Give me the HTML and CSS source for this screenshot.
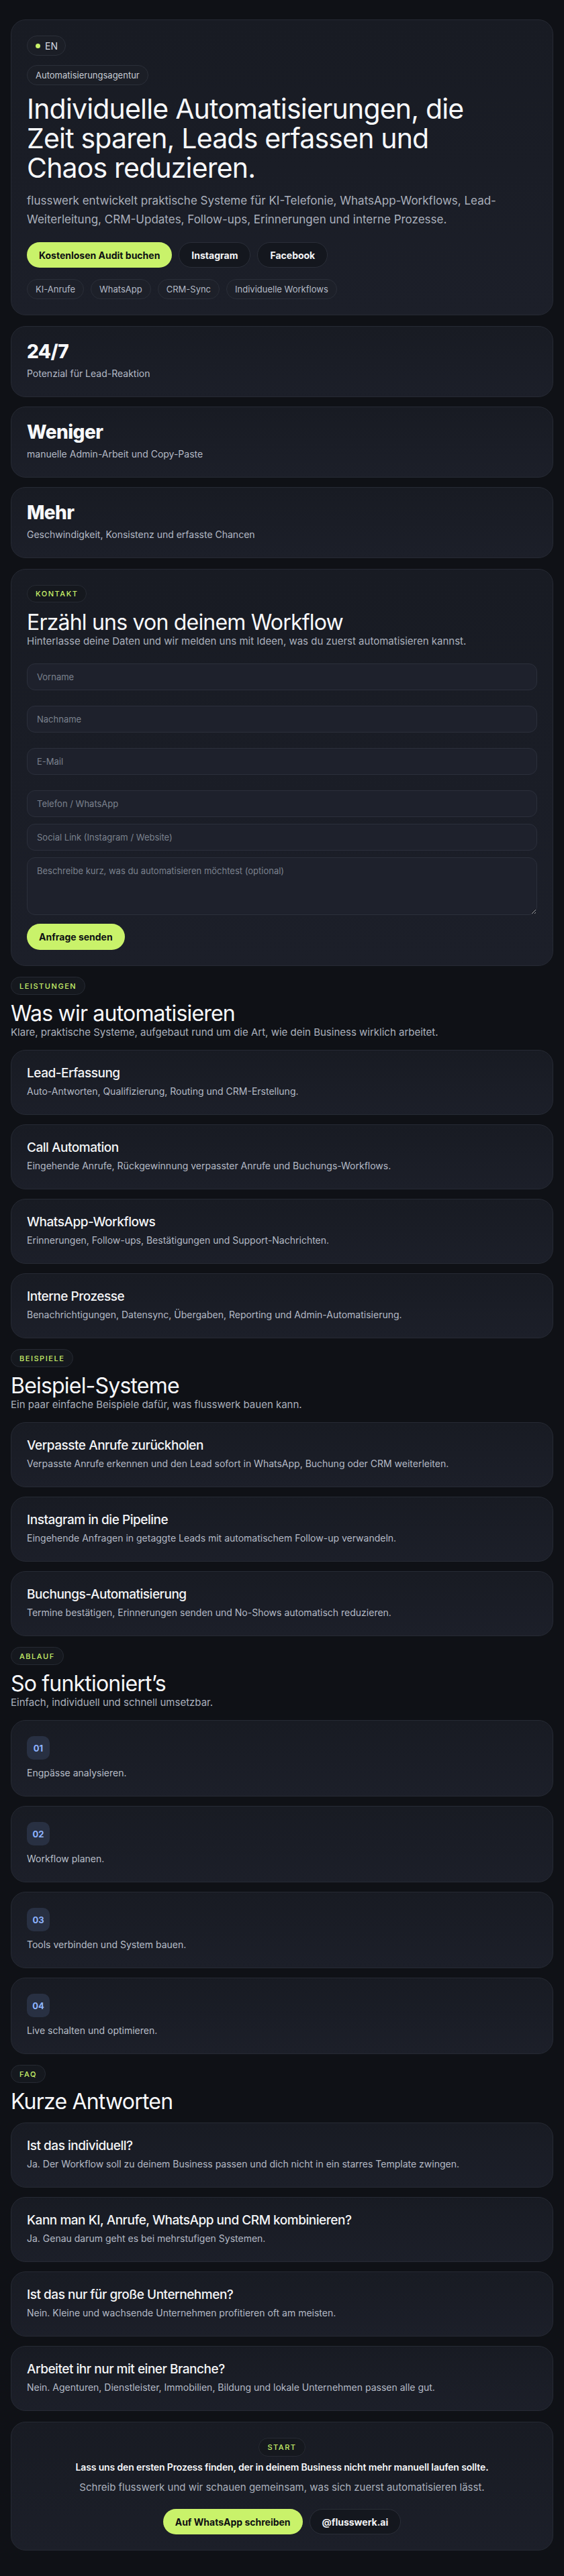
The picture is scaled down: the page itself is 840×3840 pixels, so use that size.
FILE: index.html
```html
<!DOCTYPE html>
<html lang="de">
<head>
<meta charset="utf-8">
<title>flusswerk – Automatisierungsagentur</title>
<link rel="stylesheet" href="styles.css">
</head>
<body>
<main class="page">
  <section class="card hero">
    <div class="pill lang"><span class="dot"></span>EN</div>
    <div class="pill agency">Automatisierungsagentur</div>
    <h1 class="hero-title">Individuelle Automatisierungen, die Zeit sparen, Leads erfassen und Chaos reduzieren.</h1>
    <p class="hero-text">flusswerk entwickelt praktische Systeme für KI-Telefonie, WhatsApp-Workflows, Lead-Weiterleitung, CRM-Updates, Follow-ups, Erinnerungen und interne Prozesse.</p>
    <div class="btn-row hero-btns">
      <a class="btn btn-primary">Kostenlosen Audit buchen</a>
      <a class="btn btn-ghost">Instagram</a>
      <a class="btn btn-ghost">Facebook</a>
    </div>
    <div class="tag-row">
      <span class="tag">KI-Anrufe</span>
      <span class="tag">WhatsApp</span>
      <span class="tag">CRM-Sync</span>
      <span class="tag">Individuelle Workflows</span>
    </div>
  </section>

  <div class="stack">
    <div class="card stat">
      <div class="stat-value">24/7</div>
      <div class="stat-label">Potenzial für Lead-Reaktion</div>
    </div>
    <div class="card stat">
      <div class="stat-value">Weniger</div>
      <div class="stat-label">manuelle Admin-Arbeit und Copy-Paste</div>
    </div>
    <div class="card stat">
      <div class="stat-value">Mehr</div>
      <div class="stat-label">Geschwindigkeit, Konsistenz und erfasste Chancen</div>
    </div>
  </div>

  <section class="card contact">
    <div class="eyebrow">Kontakt</div>
    <h2 class="section-title">Erzähl uns von deinem Workflow</h2>
    <p class="section-sub">Hinterlasse deine Daten und wir melden uns mit Ideen, was du zuerst automatisieren kannst.</p>
    <form class="form">
      <input class="field spaced" type="text" placeholder="Vorname">
      <input class="field spaced" type="text" placeholder="Nachname">
      <input class="field spaced" type="email" placeholder="E-Mail">
      <input class="field" type="text" placeholder="Telefon / WhatsApp">
      <input class="field" type="text" placeholder="Social Link (Instagram / Website)">
      <textarea class="field area" placeholder="Beschreibe kurz, was du automatisieren möchtest (optional)"></textarea>
      <div><button class="btn btn-primary submit" type="button">Anfrage senden</button></div>
    </form>
  </section>

  <section class="section">
    <div class="eyebrow">Leistungen</div>
    <h2 class="section-title">Was wir automatisieren</h2>
    <p class="section-sub">Klare, praktische Systeme, aufgebaut rund um die Art, wie dein Business wirklich arbeitet.</p>
    <div class="stack list">
      <div class="card item"><h3 class="item-title">Lead-Erfassung</h3><p class="item-text">Auto-Antworten, Qualifizierung, Routing und CRM-Erstellung.</p></div>
      <div class="card item"><h3 class="item-title">Call Automation</h3><p class="item-text">Eingehende Anrufe, Rückgewinnung verpasster Anrufe und Buchungs-Workflows.</p></div>
      <div class="card item"><h3 class="item-title">WhatsApp-Workflows</h3><p class="item-text">Erinnerungen, Follow-ups, Bestätigungen und Support-Nachrichten.</p></div>
      <div class="card item"><h3 class="item-title">Interne Prozesse</h3><p class="item-text">Benachrichtigungen, Datensync, Übergaben, Reporting und Admin-Automatisierung.</p></div>
    </div>
  </section>

  <section class="section">
    <div class="eyebrow">Beispiele</div>
    <h2 class="section-title">Beispiel-Systeme</h2>
    <p class="section-sub">Ein paar einfache Beispiele dafür, was flusswerk bauen kann.</p>
    <div class="stack list">
      <div class="card item"><h3 class="item-title">Verpasste Anrufe zurückholen</h3><p class="item-text">Verpasste Anrufe erkennen und den Lead sofort in WhatsApp, Buchung oder CRM weiterleiten.</p></div>
      <div class="card item"><h3 class="item-title">Instagram in die Pipeline</h3><p class="item-text">Eingehende Anfragen in getaggte Leads mit automatischem Follow-up verwandeln.</p></div>
      <div class="card item"><h3 class="item-title">Buchungs-Automatisierung</h3><p class="item-text">Termine bestätigen, Erinnerungen senden und No-Shows automatisch reduzieren.</p></div>
    </div>
  </section>

  <section class="section">
    <div class="eyebrow">Ablauf</div>
    <h2 class="section-title">So funktioniert’s</h2>
    <p class="section-sub">Einfach, individuell und schnell umsetzbar.</p>
    <div class="stack list">
      <div class="card step"><span class="step-num">01</span><p class="step-text">Engpässe analysieren.</p></div>
      <div class="card step"><span class="step-num">02</span><p class="step-text">Workflow planen.</p></div>
      <div class="card step"><span class="step-num">03</span><p class="step-text">Tools verbinden und System bauen.</p></div>
      <div class="card step"><span class="step-num">04</span><p class="step-text">Live schalten und optimieren.</p></div>
    </div>
  </section>

  <section class="section">
    <div class="eyebrow">FAQ</div>
    <h2 class="section-title">Kurze Antworten</h2>
    <div class="stack list tight">
      <div class="card item"><h3 class="item-title">Ist das individuell?</h3><p class="item-text">Ja. Der Workflow soll zu deinem Business passen und dich nicht in ein starres Template zwingen.</p></div>
      <div class="card item"><h3 class="item-title">Kann man KI, Anrufe, WhatsApp und CRM kombinieren?</h3><p class="item-text">Ja. Genau darum geht es bei mehrstufigen Systemen.</p></div>
      <div class="card item"><h3 class="item-title">Ist das nur für große Unternehmen?</h3><p class="item-text">Nein. Kleine und wachsende Unternehmen profitieren oft am meisten.</p></div>
      <div class="card item"><h3 class="item-title">Arbeitet ihr nur mit einer Branche?</h3><p class="item-text">Nein. Agenturen, Dienstleister, Immobilien, Bildung und lokale Unternehmen passen alle gut.</p></div>
    </div>
  </section>

  <section class="card cta">
    <div class="eyebrow">Start</div>
    <p class="cta-lead">Lass uns den ersten Prozess finden, der in deinem Business nicht mehr manuell laufen sollte.</p>
    <p class="cta-text">Schreib flusswerk und wir schauen gemeinsam, was sich zuerst automatisieren lässt.</p>
    <div class="btn-row center cta-btns">
      <a class="btn btn-primary">Auf WhatsApp schreiben</a>
      <a class="btn btn-ghost">@flusswerk.ai</a>
    </div>
  </section>
</main>
</body>
</html>
```

FILE: styles.css
```css
* { box-sizing: border-box; }

html, body {
  margin: 0;
  background: #0f1116;
}

body {
  font-family: Inter, "Noto Sans", "Liberation Sans", sans-serif;
  color: #f4f5f7;
  -webkit-font-smoothing: antialiased;
}

.page {
  display: flex;
  flex-direction: column;
  gap: 16px;
  padding: 29px 16px 38px;
}

.card {
  background: linear-gradient(180deg, #181b23 0%, #1c1f29 100%);
  border: 1px solid #262a34;
  border-radius: 22px;
  padding: 23px 23px;
}

.stack {
  display: flex;
  flex-direction: column;
  gap: 14px;
}

/* hero */
.hero {
  display: flex;
  flex-direction: column;
  align-items: flex-start;
}

.pill {
  display: inline-flex;
  align-items: center;
  height: 30px;
  border-radius: 999px;
  background: #1b1e26;
  border: 1px solid #2b2f39;
  color: #d6d9e0;
}

.lang {
  padding: 0 11px 0 12px;
  font-size: 14px;
  gap: 7px;
}

.dot {
  width: 7px;
  height: 7px;
  border-radius: 50%;
  background: #c8f169;
}

.agency {
  margin-top: 14px;
  padding: 0 12px;
  font-size: 13px;
  color: #c8ccd5;
}

.hero-title {
  margin: 13px 0 0;
  max-width: 690px;
  font-size: 41px;
  line-height: 44px;
  font-weight: 400;
  letter-spacing: -0.02em;
  color: #f7f8fa;
}

.hero-text {
  margin: 13px 0 0;
  font-size: 17px;
  line-height: 28px;
  color: #aab0bc;
}

.btn-row {
  display: flex;
  gap: 10px;
}

.hero-btns {
  margin-top: 20px;
}

.btn-row.center {
  justify-content: center;
}

.btn {
  display: inline-flex;
  align-items: center;
  justify-content: center;
  height: 38px;
  padding: 0 18px;
  border-radius: 999px;
  font-family: inherit;
  font-size: 14px;
  font-weight: 700;
  text-decoration: none;
  cursor: pointer;
  white-space: nowrap;
}

.btn-primary {
  background: #c9f26a;
  color: #0e1013;
  border: none;
}

.btn-ghost {
  background: #14171e;
  border: 1px solid #2a2e38;
  color: #f4f5f7;
}

.tag-row {
  display: flex;
  gap: 10px;
  margin-top: 17px;
}

.tag {
  display: inline-flex;
  align-items: center;
  height: 30px;
  padding: 0 12px;
  border-radius: 999px;
  background: #1d2029;
  border: 1px solid #2a2e38;
  font-size: 13px;
  color: #b4bac6;
}

/* stats */
.stat-value {
  font-size: 28px;
  line-height: 28px;
  font-weight: 800;
  letter-spacing: -0.02em;
  color: #f7f8fa;
}

.stat-label {
  margin-top: 8px;
  font-size: 14px;
  line-height: 22px;
  color: #b4bac6;
}

/* eyebrow */
.eyebrow {
  display: inline-flex;
  align-items: center;
  align-self: flex-start;
  height: 27px;
  padding: 0 12px;
  border-radius: 999px;
  background: #15181e;
  border: 1px solid #262a33;
  font-size: 11px;
  font-weight: 500;
  letter-spacing: 0.14em;
  text-transform: uppercase;
  color: #c8f169;
}

.section {
  display: flex;
  flex-direction: column;
}

.section-title {
  margin: 10px 0 0;
  font-size: 32px;
  line-height: 35px;
  font-weight: 400;
  letter-spacing: -0.025em;
  color: #f7f8fa;
}

.section-sub {
  margin: 0;
  font-size: 15px;
  line-height: 22px;
  color: #aab0bc;
}

.list {
  margin-top: 15px;
}

.list.tight {
  margin-top: 14px;
}

/* contact */
.contact {
  display: flex;
  flex-direction: column;
}

.contact .eyebrow {
  height: 26px;
}

.contact .section-title {
  margin-top: 12px;
}

.form {
  display: flex;
  flex-direction: column;
  gap: 10px;
  margin-top: 22px;
}

.field {
  display: block;
  width: 100%;
  height: 40px;
  padding: 0 14px;
  border-radius: 12px;
  background: #1e212c;
  border: 1px solid #2b2f3b;
  color: #e8eaee;
  font-family: inherit;
  font-size: 13px;
  outline: none;
}

.field::placeholder {
  color: #7b818e;
}

.field.spaced {
  margin-bottom: 13px;
}

.area {
  height: 86px;
  padding: 11px 14px;
  resize: vertical;
}

.submit {
  margin-top: 3px;
  height: 39px;
}

/* items */
.item-title {
  margin: 0;
  font-size: 19px;
  line-height: 22px;
  font-weight: 500;
  letter-spacing: -0.025em;
  color: #f4f5f7;
}

.item-text {
  margin: 5px 0 0;
  font-size: 14px;
  line-height: 22px;
  color: #b4bac6;
}

/* steps */
.step {
  display: flex;
  flex-direction: column;
  align-items: flex-start;
}

.step-num {
  display: inline-flex;
  align-items: center;
  justify-content: center;
  width: 34px;
  height: 35px;
  border-radius: 10px;
  background: #283042;
  color: #8fb4ff;
  font-size: 13px;
  font-weight: 700;
}

.step-text {
  margin: 9px 0 0;
  font-size: 14px;
  line-height: 22px;
  color: #b8bec9;
}

/* cta */
.cta {
  display: flex;
  flex-direction: column;
  align-items: center;
  text-align: center;
}

.cta .eyebrow {
  align-self: center;
  height: 28px;
}

.cta-lead {
  margin: 5px 0 0;
  font-size: 14px;
  line-height: 21px;
  font-weight: 600;
  letter-spacing: -0.01em;
  color: #f7f8fa;
}

.cta-text {
  margin: 9px 0 0;
  font-size: 15px;
  line-height: 22px;
  color: #aab0bc;
}

.cta-btns {
  margin-top: 21px;
}
```
